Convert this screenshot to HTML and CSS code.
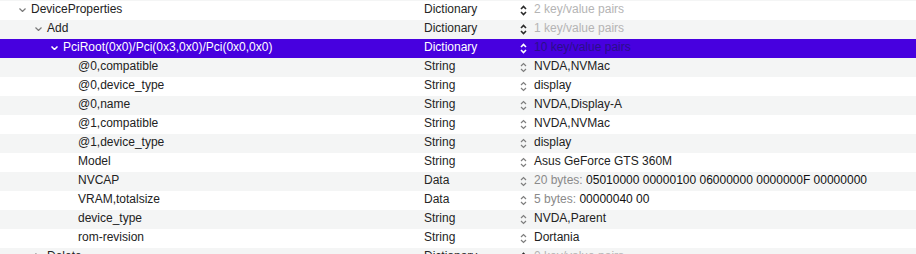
FILE: index.html
```html
<!DOCTYPE html>
<html>
<head>
    <title>ProperTree - config.plist</title>
    <link rel="stylesheet" href="styles.css">
</head>
<body>
    <div class="tree">
        <div class="row white">
            <div class="key lvl0"><span class="toggle"><svg width="7" height="4" viewBox="0 0 7 4"><path d="M0.5 0.5 L3.5 3.5 L6.5 0.5"/></svg></span><span class="text">DeviceProperties</span></div>
            <div class="type">Dictionary</div>
            <div class="value"><svg class="stepper strong" width="7" height="11" viewBox="0 0 7 11"><path d="M1 4 L3.5 1.5 L6 4 M1 7 L3.5 9.5 L6 7"/></svg><span class="muted">2 key/value pairs</span></div>
        </div>
        <div class="row grey">
            <div class="key lvl1"><span class="toggle"><svg width="7" height="4" viewBox="0 0 7 4"><path d="M0.5 0.5 L3.5 3.5 L6.5 0.5"/></svg></span><span class="text">Add</span></div>
            <div class="type">Dictionary</div>
            <div class="value"><svg class="stepper strong" width="7" height="11" viewBox="0 0 7 11"><path d="M1 4 L3.5 1.5 L6 4 M1 7 L3.5 9.5 L6 7"/></svg><span class="muted">1 key/value pairs</span></div>
        </div>
        <div class="row selected">
            <div class="key lvl2"><span class="toggle"><svg width="7" height="4" viewBox="0 0 7 4"><path d="M0.5 0.5 L3.5 3.5 L6.5 0.5"/></svg></span><span class="text">PciRoot(0x0)/Pci(0x3,0x0)/Pci(0x0,0x0)</span></div>
            <div class="type">Dictionary</div>
            <div class="value"><svg class="stepper strong" width="7" height="11" viewBox="0 0 7 11"><path d="M1 4 L3.5 1.5 L6 4 M1 7 L3.5 9.5 L6 7"/></svg><span class="muted">10 key/value pairs</span></div>
        </div>
        <div class="row grey">
            <div class="key lvl3"><span class="text">@0,compatible</span></div>
            <div class="type">String</div>
            <div class="value"><svg class="stepper" width="7" height="11" viewBox="0 0 7 11"><path d="M1 4 L3.5 1.5 L6 4 M1 7 L3.5 9.5 L6 7"/></svg><span>NVDA,NVMac</span></div>
        </div>
        <div class="row white">
            <div class="key lvl3"><span class="text">@0,device_type</span></div>
            <div class="type">String</div>
            <div class="value"><svg class="stepper" width="7" height="11" viewBox="0 0 7 11"><path d="M1 4 L3.5 1.5 L6 4 M1 7 L3.5 9.5 L6 7"/></svg><span>display</span></div>
        </div>
        <div class="row grey">
            <div class="key lvl3"><span class="text">@0,name</span></div>
            <div class="type">String</div>
            <div class="value"><svg class="stepper" width="7" height="11" viewBox="0 0 7 11"><path d="M1 4 L3.5 1.5 L6 4 M1 7 L3.5 9.5 L6 7"/></svg><span>NVDA,Display-A</span></div>
        </div>
        <div class="row white">
            <div class="key lvl3"><span class="text">@1,compatible</span></div>
            <div class="type">String</div>
            <div class="value"><svg class="stepper" width="7" height="11" viewBox="0 0 7 11"><path d="M1 4 L3.5 1.5 L6 4 M1 7 L3.5 9.5 L6 7"/></svg><span>NVDA,NVMac</span></div>
        </div>
        <div class="row grey">
            <div class="key lvl3"><span class="text">@1,device_type</span></div>
            <div class="type">String</div>
            <div class="value"><svg class="stepper" width="7" height="11" viewBox="0 0 7 11"><path d="M1 4 L3.5 1.5 L6 4 M1 7 L3.5 9.5 L6 7"/></svg><span>display</span></div>
        </div>
        <div class="row white">
            <div class="key lvl3"><span class="text">Model</span></div>
            <div class="type">String</div>
            <div class="value"><svg class="stepper" width="7" height="11" viewBox="0 0 7 11"><path d="M1 4 L3.5 1.5 L6 4 M1 7 L3.5 9.5 L6 7"/></svg><span>Asus GeForce GTS 360M</span></div>
        </div>
        <div class="row grey">
            <div class="key lvl3"><span class="text">NVCAP</span></div>
            <div class="type">Data</div>
            <div class="value"><svg class="stepper" width="7" height="11" viewBox="0 0 7 11"><path d="M1 4 L3.5 1.5 L6 4 M1 7 L3.5 9.5 L6 7"/></svg><span><span class="bytes">20 bytes:</span> <span class="hex">05010000 00000100 06000000 0000000F 00000000</span></span></div>
        </div>
        <div class="row white">
            <div class="key lvl3"><span class="text">VRAM,totalsize</span></div>
            <div class="type">Data</div>
            <div class="value"><svg class="stepper" width="7" height="11" viewBox="0 0 7 11"><path d="M1 4 L3.5 1.5 L6 4 M1 7 L3.5 9.5 L6 7"/></svg><span><span class="bytes">5 bytes:</span> <span class="hex">00000040 00</span></span></div>
        </div>
        <div class="row grey">
            <div class="key lvl3"><span class="text">device_type</span></div>
            <div class="type">String</div>
            <div class="value"><svg class="stepper" width="7" height="11" viewBox="0 0 7 11"><path d="M1 4 L3.5 1.5 L6 4 M1 7 L3.5 9.5 L6 7"/></svg><span>NVDA,Parent</span></div>
        </div>
        <div class="row white">
            <div class="key lvl3"><span class="text">rom-revision</span></div>
            <div class="type">String</div>
            <div class="value"><svg class="stepper" width="7" height="11" viewBox="0 0 7 11"><path d="M1 4 L3.5 1.5 L6 4 M1 7 L3.5 9.5 L6 7"/></svg><span>Dortania</span></div>
        </div>
        <div class="row grey">
            <div class="key lvl1"><span class="toggle"><svg width="4" height="7" viewBox="0 0 4 7"><path d="M0.5 0.5 L3.5 3.5 L0.5 6.5"/></svg></span><span class="text">Delete</span></div>
            <div class="type">Dictionary</div>
            <div class="value"><svg class="stepper strong" width="7" height="11" viewBox="0 0 7 11"><path d="M1 4 L3.5 1.5 L6 4 M1 7 L3.5 9.5 L6 7"/></svg><span class="muted">0 key/value pairs</span></div>
        </div>
    </div>
</body>
</html>
```

FILE: styles.css
```css
body {
    margin: 0;
    background-color: #ffffff;
    font-family: "Liberation Sans", Arial, sans-serif;
    font-size: 12px;
    color: #222222;
    overflow: hidden;
}

.tree {
    border-top: 1px solid #f4f5f5;
}

.row {
    display: grid;
    grid-template-columns: 410px 98px 1fr;
    height: 19px;
    white-space: nowrap;
}

.row.white {
    background-color: #ffffff;
}

.row.grey {
    background-color: #f4f5f5;
}

.row.selected {
    background-color: #4700df;
    color: #ffffff;
}

.key,
.type,
.value {
    display: flex;
    align-items: center;
    line-height: 17px;
    padding-bottom: 2px;
    box-sizing: border-box;
    height: 19px;
    overflow: hidden;
}

.lvl0 {
    padding-left: 18px;
}

.lvl1 {
    padding-left: 34px;
}

.lvl2 {
    padding-left: 50px;
}

.lvl3 {
    padding-left: 78px;
}

.toggle {
    display: flex;
    align-items: center;
    justify-content: flex-start;
    width: 13px;
    height: 17px;
    padding-left: 1px;
    box-sizing: border-box;
}

.toggle svg path {
    fill: none;
    stroke: #7a7a7a;
    stroke-width: 1.2;
}

.selected .toggle svg path {
    stroke: #ffffff;
    stroke-width: 1.5;
}

.type {
    padding-left: 14px;
    color: #262626;
}

.selected .type {
    color: #ffffff;
}

.value {
    padding-left: 12px;
}

.stepper {
    flex: none;
    margin-right: 7px;
    margin-top: 1px;
}

.stepper path {
    fill: none;
    stroke: #7e7e7e;
    stroke-width: 1.2;
}

.stepper.strong path {
    stroke: #2a2a2a;
    stroke-width: 1.6;
}

.selected .stepper path {
    stroke: #ffffff;
}

.muted {
    color: #b4b4b4;
}

.selected .muted {
    color: #2b0f8a;
}

.bytes {
    color: #8a8a8a;
}

.hex {
    color: #111111;
}
```
